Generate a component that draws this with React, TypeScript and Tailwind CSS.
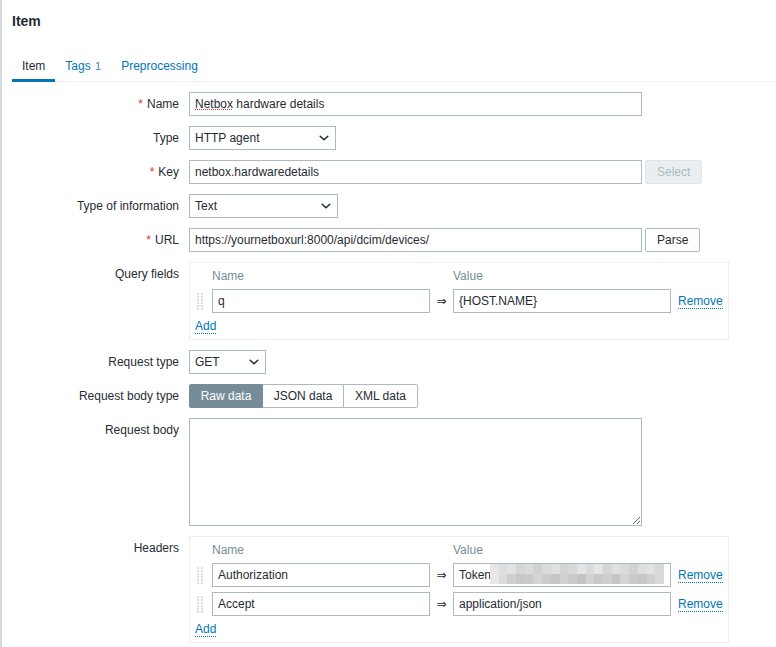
import React from "react";

const FONT = { fontFamily: '"Liberation Sans", Arial, "DejaVu Sans", sans-serif' };

function Chevron() {
  return (
    <svg width="10" height="6" viewBox="0 0 10 6" className="shrink-0">
      <path d="M1.2 1.2 L5 4.8 L8.8 1.2" fill="none" stroke="#1f2c33" strokeWidth="1.5" strokeLinecap="round" strokeLinejoin="round" />
    </svg>
  );
}

function Handle() {
  const ys = [2, 5, 8, 11, 14, 17];
  return (
    <svg width="8" height="20" viewBox="0 0 8 20">
      {ys.map((y) => (
        <g key={y}>
          <rect x="1" y={y} width="2" height="2" fill="#d8dee2" />
          <rect x="5" y={y} width="2" height="2" fill="#d8dee2" />
        </g>
      ))}
    </svg>
  );
}

function Label({ text, required }: { text: string; required?: boolean }) {
  return (
    <div className="w-[177px] shrink-0 text-right leading-[24px] text-[12px] text-[#1f2c33]">
      {required && <span className="text-[#e33734] mr-[4px]">*</span>}
      {text}
    </div>
  );
}

function Row({ label, required, children }: { label: string; required?: boolean; children: React.ReactNode }) {
  return (
    <div className="flex items-start">
      <Label text={label} required={required} />
      <div className="ml-[10px] flex items-center">{children}</div>
    </div>
  );
}

function TextInput({ value, w = "w-[453px]" }: { value: string; w?: string }) {
  return (
    <input
      readOnly
      value={value}
      className={`${w} h-[24px] border border-[#acbbc2] bg-white px-[5px] text-[12px] text-[#1f2c33] outline-none`}
      style={FONT}
    />
  );
}

function Select({ value, w }: { value: string; w: string }) {
  return (
    <div className={`${w} h-[24px] border border-[#acbbc2] bg-white pl-[5px] pr-[6px] flex items-center justify-between text-[12px] text-[#1f2c33]`}>
      <span>{value}</span>
      <Chevron />
    </div>
  );
}

function DottedLink({ text }: { text: string }) {
  return (
    <span className="text-[#0275b8] text-[12px] leading-[14px] border-b border-dotted border-[#0275b8]">{text}</span>
  );
}

const MOSAIC_TOP = [
  "bg-[#e6e6e6]", "bg-[#dedede]", "bg-[#e2e2e2]", "bg-[#d6d6d6]", "bg-[#dcdcdc]", "bg-[#d2d2d2]", "bg-[#dadada]",
  "bg-[#e0e0e0]", "bg-[#d4d4d4]", "bg-[#d8d8d8]", "bg-[#e4e4e4]", "bg-[#dcdcdc]", "bg-[#e6e6e6]", "bg-[#d6d6d6]",
  "bg-[#e0e0e0]", "bg-[#dadada]", "bg-[#d2d2d2]", "bg-[#dedede]", "bg-[#e2e2e2]", "bg-[#d8d8d8]",
];
const MOSAIC_BOTTOM = [
  "bg-[#e8e8e8]", "bg-[#dcdcdc]", "bg-[#cfcfcf]", "bg-[#c8c8c8]", "bg-[#cacaca]", "bg-[#d4d4d4]", "bg-[#cccccc]",
  "bg-[#c6c6c6]", "bg-[#d0d0d0]", "bg-[#cbcbcb]", "bg-[#c4c4c4]", "bg-[#d2d2d2]", "bg-[#c9c9c9]", "bg-[#cecece]",
  "bg-[#c5c5c5]", "bg-[#d4d4d4]", "bg-[#cacaca]", "bg-[#c7c7c7]", "bg-[#d0d0d0]", "bg-[#dadada]",
];

function Mosaic() {
  return (
    <div className="absolute left-[37px] top-[1px] w-[174px] h-[20px] grid grid-cols-[repeat(20,1fr)] grid-rows-2">
      {MOSAIC_TOP.map((c, i) => (
        <div key={"t" + i} className={c} />
      ))}
      {MOSAIC_BOTTOM.map((c, i) => (
        <div key={"b" + i} className={c} />
      ))}
    </div>
  );
}

type KV = { name: string; value: string; token?: boolean };

function KVBox({ rows }: { rows: KV[] }) {
  const grid = "grid grid-cols-[17px_218px_23px_218px_auto] items-center";
  return (
    <div className="w-[540px] border border-[#ebeef0] bg-white px-[5px] pt-[4px] pb-[4px] flex flex-col">
      <div className={`${grid} h-[18px] text-[12px] text-[#768d99]`}>
        <div />
        <div>Name</div>
        <div />
        <div>Value</div>
        <div />
      </div>
      <div className="flex flex-col gap-[5px] mt-[4px]">
        {rows.map((r, i) => (
          <div key={i} className={`${grid} h-[24px]`}>
            <div className="flex items-center pl-[1px]">
              <Handle />
            </div>
            <TextInput value={r.name} w="w-[218px]" />
            <div className="text-center text-[12px] text-[#1f2c33]">⇒</div>
            <div className="relative w-[218px] h-[24px]">
              <TextInput value={r.value} w="w-[218px]" />
              {r.token && <Mosaic />}
            </div>
            <div className="pl-[7px] flex items-center">
              <DottedLink text="Remove" />
            </div>
          </div>
        ))}
      </div>
      <div className="h-[18px] mt-[4px] flex items-center">
        <DottedLink text="Add" />
      </div>
    </div>
  );
}

export default function App() {
  return (
    <div className="w-[776px] h-[647px] bg-white flex overflow-hidden text-[12px] text-[#1f2c33]" style={FONT}>
      <div className="w-[2px] shrink-0 bg-[#d3dbdf]" />
      <div className="flex-1 flex flex-col">
        <div className="h-[42px] flex items-center pl-[10px]">
          <h4 className="text-[14px] font-bold text-[#1f2c33]">Item</h4>
        </div>
        <div className="ml-[10px] h-[40px] flex items-end border-b border-[#ebeef0]">
          <div className="px-[10px] pb-[6px] leading-[14px] border-b-[3px] border-[#0275b8] -mb-px text-[#1f2c33]">Item</div>
          <div className="px-[10px] pb-[8px] leading-[14px] text-[#0275b8]">
            Tags <span className="text-[11px] ml-[1px] text-[#3d8dc4]">1</span>
          </div>
          <div className="px-[10px] pb-[8px] leading-[14px] text-[#0275b8]">Preprocessing</div>
        </div>

        <div className="pt-[10px] flex flex-col gap-[10px]">
          <Row label="Name" required>
            <div className="relative">
              <TextInput value="Netbox hardware details" />
              <div className="absolute left-[6px] top-[17px] w-[37px] border-b border-dotted border-[#e33734]" />
            </div>
          </Row>
          <Row label="Type">
            <Select value="HTTP agent" w="w-[147px]" />
          </Row>
          <Row label="Key" required>
            <TextInput value="netbox.hardwaredetails" />
            <button className="ml-[3px] h-[24px] px-[11px] rounded-[2px] border border-[#dfe4e7] bg-[#ebeef0] text-[#acbbc2] text-[12px]" style={FONT}>
              Select
            </button>
          </Row>
          <Row label="Type of information">
            <Select value="Text" w="w-[149px]" />
          </Row>
          <Row label="URL" required>
            <TextInput value="https://yournetboxurl:8000/api/dcim/devices/" />
            <button className="ml-[3px] h-[24px] px-[11px] rounded-[2px] border border-[#acbbc2] bg-white text-[#1f2c33] text-[12px]" style={FONT}>
              Parse
            </button>
          </Row>
          <Row label="Query fields">
            <KVBox rows={[{ name: "q", value: "{HOST.NAME}" }]} />
          </Row>
          <Row label="Request type">
            <Select value="GET" w="w-[77px]" />
          </Row>
          <Row label="Request body type">
            <div className="flex h-[24px] text-[12px]">
              <div className="w-[74px] flex items-center justify-center bg-[#768d99] border border-[#768d99] text-white rounded-l-[2px]">Raw data</div>
              <div className="w-[81px] flex items-center justify-center bg-white border-y border-r border-[#acbbc2] text-[#1f2c33]">JSON data</div>
              <div className="w-[74px] flex items-center justify-center bg-white border-y border-r border-[#acbbc2] text-[#1f2c33] rounded-r-[2px]">XML data</div>
            </div>
          </Row>
          <Row label="Request body">
            <textarea readOnly className="w-[453px] h-[108px] border border-[#acbbc2] bg-white outline-none block" />
          </Row>
          <Row label="Headers">
            <KVBox
              rows={[
                { name: "Authorization", value: "Token", token: true },
                { name: "Accept", value: "application/json" },
              ]}
            />
          </Row>
        </div>
      </div>
    </div>
  );
}
